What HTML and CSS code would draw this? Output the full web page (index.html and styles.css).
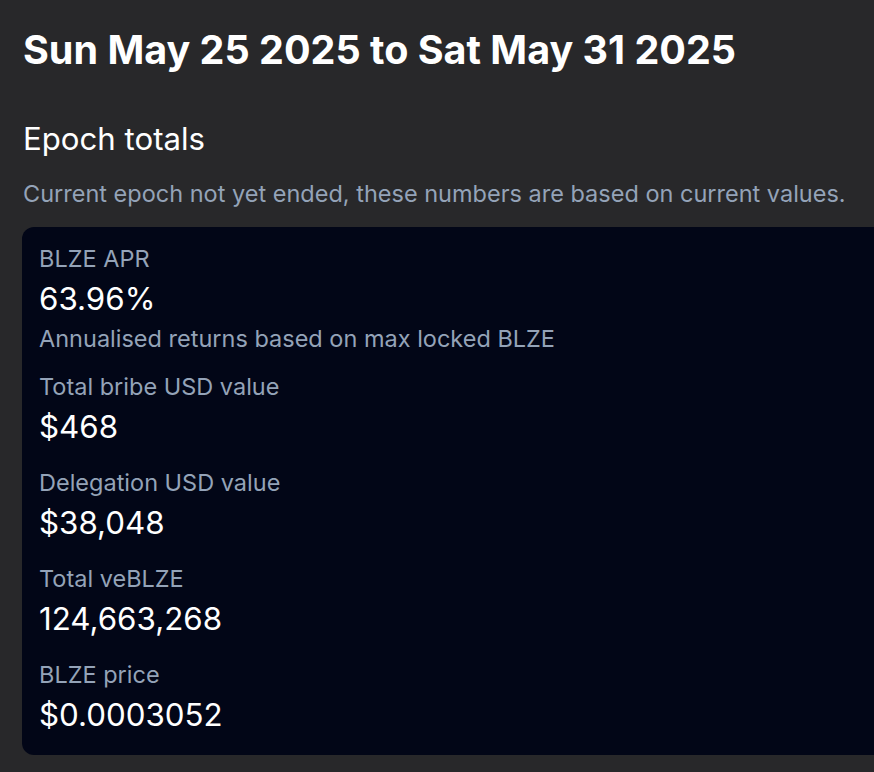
FILE: index.html
```html
<!DOCTYPE html>
<html>
<head>
<meta charset="utf-8">
<link rel="stylesheet" href="styles.css">
</head>
<body>
<main class="page">
  <h1 class="title">Sun May 25 2025 to Sat May 31 2025</h1>
  <h2 class="section">Epoch totals</h2>
  <p class="note">Current epoch not yet ended, these numbers are based on current values.</p>
  <div class="card">
    <div class="stat">
      <div class="label">BLZE APR</div>
      <div class="value">63.96%</div>
      <div class="desc">Annualised returns based on max locked BLZE</div>
    </div>
    <div class="stat">
      <div class="label">Total bribe USD value</div>
      <div class="value">$468</div>
    </div>
    <div class="stat">
      <div class="label">Delegation USD value</div>
      <div class="value">$38,048</div>
    </div>
    <div class="stat">
      <div class="label">Total veBLZE</div>
      <div class="value">124,663,268</div>
    </div>
    <div class="stat">
      <div class="label">BLZE price</div>
      <div class="value">$0.0003052</div>
    </div>
  </div>
</main>
</body>
</html>
```

FILE: styles.css
```css
html, body {
  margin: 0;
  padding: 0;
  background: #28282a;
}
body {
  font-family: Inter, "Noto Sans", sans-serif;
  color: #ffffff;
}
.page {
  padding: 26px 0 0 22px;
}
.title {
  margin: 0 0 0 1px;
  font-size: 39.5px;
  line-height: 48px;
  font-weight: 700;
}
.section {
  margin: 45px 0 0 1px;
  font-size: 31.2px;
  line-height: 40px;
  font-weight: 400;
}
.note {
  margin: 19px 0 0 1px;
  font-size: 23.5px;
  line-height: 32px;
  color: #94a3b8;
  white-space: nowrap;
}
.card {
  margin: 17px 0 0 0;
  background: #020617;
  border-radius: 12px 0 0 12px;
  padding: 16px 17px;
  display: flex;
  flex-direction: column;
  gap: 16px;
}
.stat {
  display: flex;
  flex-direction: column;
}
.label {
  font-size: 23.5px;
  line-height: 32px;
  color: #94a3b8;
}
.value {
  font-size: 31.3px;
  line-height: 48px;
  color: #ffffff;
}
.desc {
  font-size: 23.5px;
  line-height: 32px;
  color: #94a3b8;
}
```
